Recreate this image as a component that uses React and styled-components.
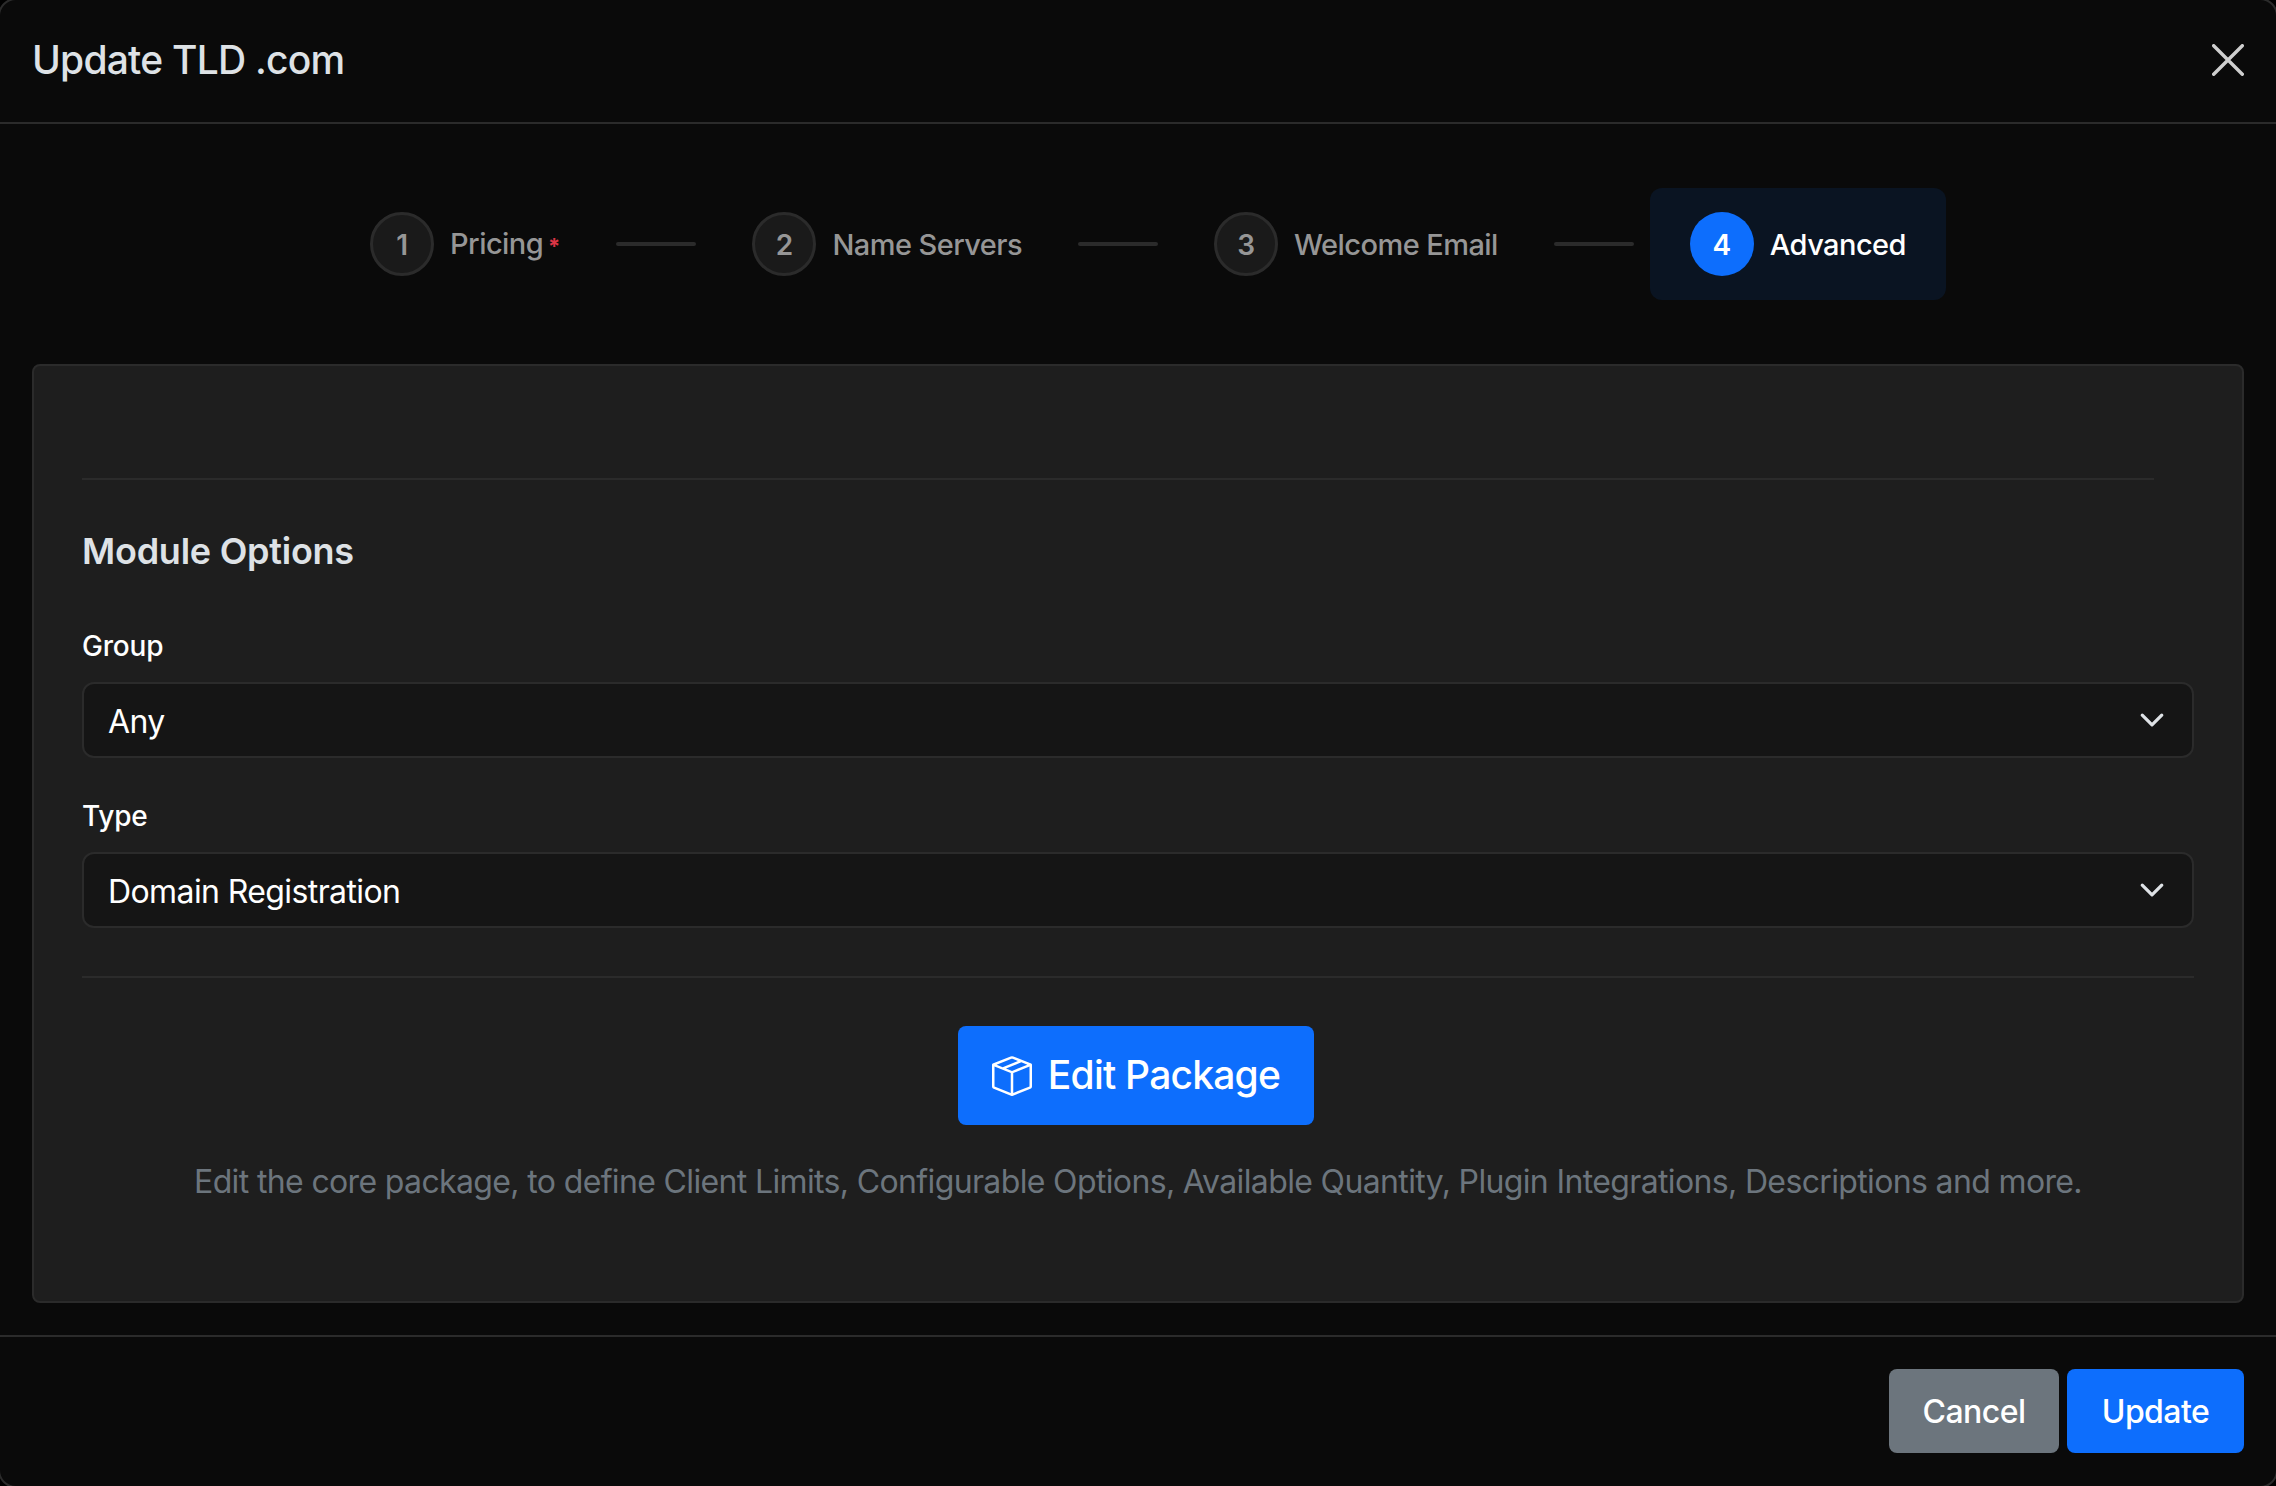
import React from 'react';
import styled, { createGlobalStyle } from 'styled-components';
import { BsBoxSeam } from 'react-icons/bs';

const Global = createGlobalStyle`
  html, body { margin: 0; padding: 0; background: #000; overflow: hidden; }
  body { font-family: Inter, "Liberation Sans", sans-serif; -webkit-font-smoothing: antialiased; }
  * { box-sizing: border-box; }
`;

const Modal = styled.div`
  width: 2280px; height: 1490px; margin: -2px; background: #0a0a0a; border: 2px solid #2b2b2b; border-radius: 18px;
  display: flex; flex-direction: column; overflow: hidden; color: #dee2e6;
`;
const Header = styled.header`
  height: 124px; flex: none; display: flex; align-items: center; justify-content: space-between;
  padding: 0 32px 2px 32px; border-bottom: 2px solid #2b2b2b;
`;
const Title = styled.h1`margin: 0 0 2px; font-size: 39px; font-weight: 500; letter-spacing: -0.78px; color: #dee2e6; line-height: 1;`;
const CloseButton = styled.button`
  width: 32px; height: 32px; padding: 0; background: none; border: 0; color: #cfcfcf; display: flex;
`;
const Body = styled.main`flex: 1; padding: 64px 32px 32px;`;
const Stepper = styled.nav`display: flex; align-items: center; justify-content: center; gap: 16px; margin-bottom: 64px;`;
const Step = styled.div`
  display: flex; align-items: center; gap: 16px; padding: 24px 40px; border-radius: 12px;
  background: ${p => p.$active ? '#0a1422' : 'transparent'};
`;
const Circle = styled.span`
  width: 64px; height: 64px; border-radius: 50%; display: flex; align-items: center; justify-content: center;
  font-size: 28px; font-weight: 600; flex: none; padding-top: 2px;
  background: ${p => p.$active ? '#0d6efd' : '#1a1a1a'};
  border: ${p => p.$active ? '0' : '3px solid #2b2b2b'};
  color: ${p => p.$active ? '#fff' : '#969696'};
`;
const StepLabel = styled.span`
  font-size: 29px; font-weight: 500; letter-spacing: -0.56px; line-height: 36px; white-space: nowrap; padding-top: 2px;
  color: ${p => p.$active ? '#fff' : '#969696'};
`;
const Star = styled.span`color: #dc3545; font-size: 22px; font-weight: 700; margin-left: 5px; letter-spacing: 0;`;
const Connector = styled.span`width: 80px; height: 4px; background: #2b2b2b; flex: none; border-radius: 2px;`;
const Card = styled.section`
  background: #1e1e1e; border: 2px solid #2b2b2b; border-radius: 8px; height: 939px; padding: 112px 48px 0;
`;
const Rule = styled.hr`
  border: 0; border-top: 2px solid #2b2b2b; margin: 0 ${p => p.$inset || 0}px 0 0;
`;
const Heading = styled.h2`margin: 49px 0 0; font-size: 36px; font-weight: 600; letter-spacing: -0.25px; color: #dee2e6; line-height: 44px;`;
const Field = styled.div`margin-top: ${p => p.$top}px;`;
const Label = styled.label`display: block; font-size: 28px; font-weight: 500; letter-spacing: -0.2px; color: #fff; line-height: 34px; margin-bottom: 19px;`;
const Select = styled.div`
  height: 76px; background: #151515; border: 2px solid #2b2b2b; border-radius: 12px; display: flex;
  align-items: center; justify-content: space-between; padding: 2px 27px 0 24px; font-size: 32px; letter-spacing: -0.6px; color: #fff;
  svg { margin-top: -2px; }
`;
const Center = styled.div`display: flex; flex-direction: column; align-items: center; margin-top: 48px;`;
const Primary = styled.button`
  display: inline-flex; align-items: center; justify-content: center; border: 0; color: #fff; font-family: inherit;
  background: ${p => p.$secondary ? '#6c757d' : '#0d6efd'}; border-radius: 8px; font-weight: 500;
`;
const EditButton = styled(Primary)`
  width: 356px; height: 99px; gap: 16px; margin-right: 4px; padding-bottom: 4px;
  font-size: 39px; letter-spacing: -0.78px;
  svg { flex: none; margin-top: 4px; }
`;
const Help = styled.p`margin: 37px 0 0; font-size: 32px; letter-spacing: -0.64px; color: #6c757d; line-height: 40px; white-space: nowrap;`;
const Footer = styled.footer`
  height: 151px; flex: none; border-top: 2px solid #2b2b2b; display: flex; justify-content: flex-end; gap: 8px;
  padding: 32px 32px 0;
`;
const FootButton = styled(Primary)`height: 84px; width: ${p => p.$w}px; font-size: 32px; letter-spacing: -0.55px;`;

const Chevron = () => (
  <svg width="26" height="26" viewBox="0 0 16 16" fill="none" stroke="#dee2e6" strokeWidth="2" strokeLinecap="round" strokeLinejoin="round">
    <path d="m2 5 6 6 6-6" />
  </svg>
);

const steps = [['1', 'Pricing', true], ['2', 'Name Servers'], ['3', 'Welcome Email'], ['4', 'Advanced']];

export default function App() {
  return (
    <>
      <Global />
      <Modal>
        <Header>
          <Title>Update TLD .com</Title>
          <CloseButton aria-label="Close">
            <svg width="32" height="32" viewBox="0 0 32 32" fill="none" stroke="currentColor" strokeWidth="3.4" strokeLinecap="round"><path d="M1.7 1.7l28.6 28.6M30.3 1.7 1.7 30.3" /></svg>
          </CloseButton>
        </Header>
        <Body>
          <Stepper>
            {steps.map(([n, label, req], i) => {
              const active = i === 3;
              return (
                <React.Fragment key={n}>
                  {i > 0 && <Connector />}
                  <Step $active={active}>
                    <Circle $active={active}>{n}</Circle>
                    <StepLabel $active={active}>{label}{req && <Star>*</Star>}</StepLabel>
                  </Step>
                </React.Fragment>
              );
            })}
          </Stepper>
          <Card>
            <Rule $inset={40} />
            <Heading>Module Options</Heading>
            <Field $top={56}>
              <Label>Group</Label>
              <Select>Any<Chevron /></Select>
            </Field>
            <Field $top={41}>
              <Label>Type</Label>
              <Select>Domain Registration<Chevron /></Select>
            </Field>
            <Field $top={48}><Rule /></Field>
            <Center>
              <EditButton><BsBoxSeam size={40} />Edit Package</EditButton>
              <Help>Edit the core package, to define Client Limits, Configurable Options, Available Quantity, Plugin Integrations, Descriptions and more.</Help>
            </Center>
          </Card>
        </Body>
        <Footer>
          <FootButton $secondary $w={170}>Cancel</FootButton>
          <FootButton $w={177}>Update</FootButton>
        </Footer>
      </Modal>
    </>
  );
}
